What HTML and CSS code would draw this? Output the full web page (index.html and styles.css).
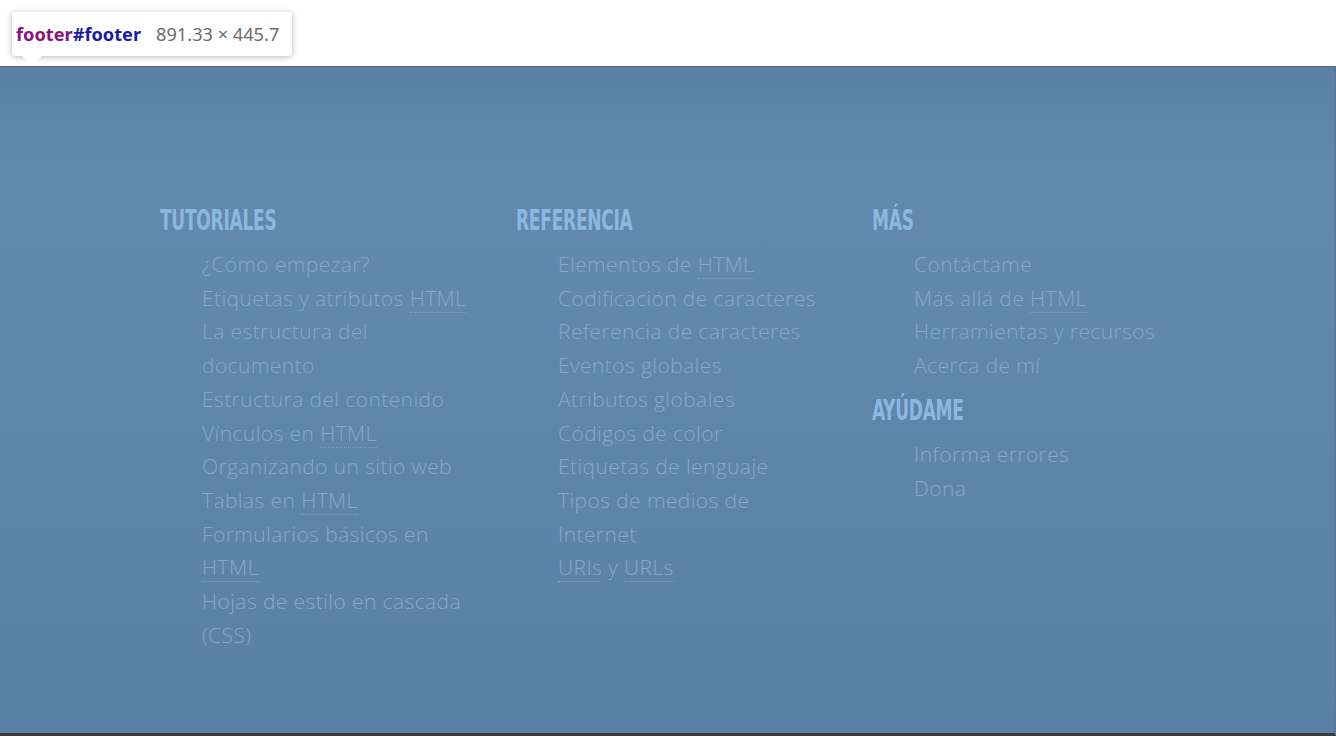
FILE: index.html
```html
<!DOCTYPE html>
<html lang="es">
<head>
<meta charset="utf-8">
<title>Footer</title>
<link rel="stylesheet" href="styles.css">
</head>
<body>
<div class="topbar">
  <div class="tooltip">
    <span class="tag">footer</span><span class="id">#footer</span>
    <span class="dims">891.33 × 445.7</span>
  </div>
</div>
<footer id="footer" class="footer">
  <div class="cols">
    <section class="col">
      <h3 class="head"><span class="head-text">TUTORIALES</span></h3>
      <ul class="links">
        <li>¿Cómo empezar?</li>
        <li>Etiquetas y atributos <abbr>HTML</abbr></li>
        <li>La estructura del documento</li>
        <li>Estructura del contenido</li>
        <li>Vínculos en <abbr>HTML</abbr></li>
        <li>Organizando un sitio web</li>
        <li>Tablas en <abbr>HTML</abbr></li>
        <li>Formularios básicos en <abbr>HTML</abbr></li>
        <li>Hojas de estilo en cascada (CSS)</li>
      </ul>
    </section>
    <section class="col">
      <h3 class="head"><span class="head-text">REFERENCIA</span></h3>
      <ul class="links">
        <li>Elementos de <abbr>HTML</abbr></li>
        <li>Codificación de caracteres</li>
        <li>Referencia de caracteres</li>
        <li>Eventos globales</li>
        <li>Atributos globales</li>
        <li>Códigos de color</li>
        <li>Etiquetas de lenguaje</li>
        <li>Tipos de medios de Internet</li>
        <li><abbr>URIs</abbr> y <abbr>URLs</abbr></li>
      </ul>
    </section>
    <section class="col">
      <h3 class="head"><span class="head-text">MÁS</span></h3>
      <ul class="links">
        <li>Contáctame</li>
        <li>Más allá de <abbr>HTML</abbr></li>
        <li>Herramientas y recursos</li>
        <li>Acerca de mí</li>
      </ul>
      <h3 class="head head-next"><span class="head-text">AYÚDAME</span></h3>
      <ul class="links">
        <li>Informa errores</li>
        <li>Dona</li>
      </ul>
    </section>
  </div>
</footer>
</body>
</html>
```
FILE: styles.css
```css
html, body {
  margin: 0;
  padding: 0;
  background: #ffffff;
  overflow: hidden;
}

.topbar {
  position: relative;
  height: 66px;
  background: #ffffff;
}

.tooltip {
  position: absolute;
  left: 12px;
  top: 12px;
  width: 280px;
  height: 44px;
  box-sizing: border-box;
  padding: 0 0 0 4px;
  display: flex;
  align-items: center;
  background: #ffffff;
  border-radius: 3px;
  box-shadow: 0 1px 6px rgba(0, 0, 0, 0.28);
  font-family: "Noto Sans", "Open Sans", sans-serif;
  font-size: 18.2px;
  white-space: nowrap;
  z-index: 2;
}

.tooltip::after {
  content: "";
  position: absolute;
  left: 10px;
  bottom: -10px;
  width: 0;
  height: 0;
  border-left: 10px solid transparent;
  border-right: 10px solid transparent;
  border-top: 10px solid #ffffff;
}

.tag {
  color: #881280;
  font-weight: 700;
}

.id {
  color: #1a1aa6;
  font-weight: 700;
}

.dims {
  color: #6b6b6b;
  margin-left: 15px;
}

.footer {
  height: 670px;
  box-sizing: border-box;
  border-top: 1px solid #5a6673;
  border-bottom: 3px solid #3b3b3b;
  border-right: 2px solid #56799d;
  background: linear-gradient(to bottom, #5b80a6 0px, #6489af 104px, #6187ad 220px, #5b80a5 100%);
  padding: 136px 0 0 160px;
}

.cols {
  display: grid;
  grid-template-columns: 356px 356px 356px;
}

.head {
  margin: 0;
  height: 36px;
  line-height: 36px;
  font-family: "Liberation Sans Narrow", "DejaVu Sans Condensed", sans-serif;
  font-weight: 700;
  font-size: 28.5px;
  letter-spacing: -0.4px;
  color: #8cb8e0;
  white-space: nowrap;
}

.head-text {
  display: inline-block;
  transform: scaleX(0.665);
  transform-origin: left center;
}

.head-next {
  margin-top: 10px;
}

.links {
  list-style: none;
  margin: 9px 0 0 0;
  padding: 0 0 0 42px;
  width: 268px;
  font-family: "Open Sans", "Lato", sans-serif;
  font-weight: 300;
  font-size: 21px;
  letter-spacing: 0.4px;
  line-height: 33.7px;
  color: #86a8c9;
}

.links li {
  margin: 0;
}

abbr {
  text-decoration: none;
  border-bottom: 1px dotted #7f9fbf;
}
```
